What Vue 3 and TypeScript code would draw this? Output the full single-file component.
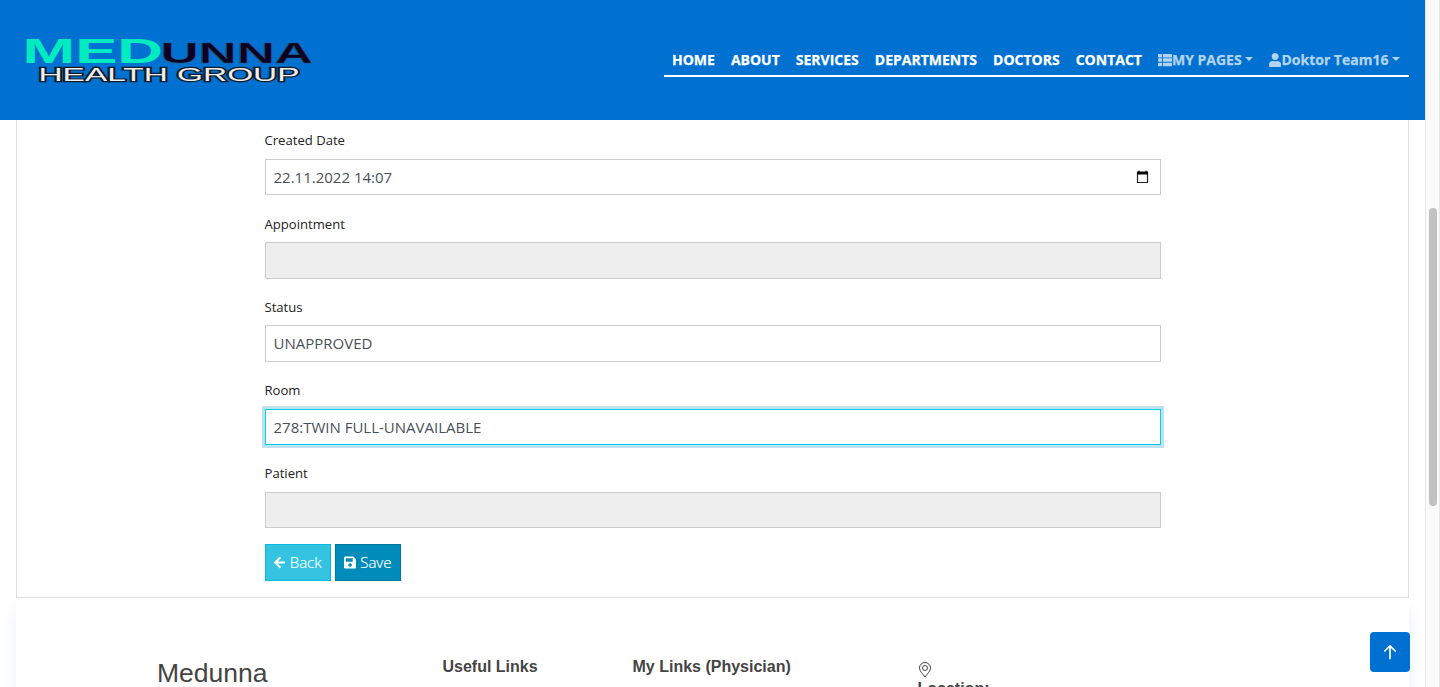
<script setup lang="ts">
interface Field {
  label: string
  value: string
  disabled?: boolean
  focused?: boolean
  date?: boolean
}

const links: string[] = ['HOME', 'ABOUT', 'SERVICES', 'DEPARTMENTS', 'DOCTORS', 'CONTACT']

const fields: Field[] = [
  { label: 'Created Date', value: '22.11.2022 14:07', date: true },
  { label: 'Appointment', value: '', disabled: true },
  { label: 'Status', value: 'UNAPPROVED' },
  { label: 'Room', value: '278:TWIN FULL-UNAVAILABLE', focused: true },
  { label: 'Patient', value: '', disabled: true },
]
</script>

<template>
  <div class="window">
    <div class="page">
      <header class="header">
        <svg class="logo" width="300" height="60" viewBox="0 0 300 60">
          <g font-family="Liberation Sans, Arial, sans-serif" font-weight="700">
            <text x="-0.500" y="33.300" font-size="34.500" textLength="140.500" lengthAdjust="spacingAndGlyphs" fill="#00ebc0">MED</text>
            <text x="137.500" y="33" font-size="30" textLength="152.500" lengthAdjust="spacingAndGlyphs" fill="#080325" stroke="#39496a" stroke-width="0.5">UNNA</text>
          </g>
          <text class="tagline" x="15.500" y="51.300" font-size="17.500" textLength="261" lengthAdjust="spacingAndGlyphs">HEALTH GROUP</text>
        </svg>
        <nav class="nav">
          <a v-for="link in links" :key="link" class="nav-link">{{ link }}</a>
          <a class="nav-link muted">
            <svg class="icon" width="14" height="14" viewBox="0 0 512 512" fill="currentColor">
              <path d="M149 216v80c0 13-11 24-24 24H24c-13 0-24-11-24-24v-80c0-13 11-24 24-24h101c13 0 24 11 24 24zM0 376v80c0 13 11 24 24 24h101c13 0 24-11 24-24v-80c0-13-11-24-24-24H24c-13 0-24 11-24 24zM125 32H24C11 32 0 43 0 56v80c0 13 11 24 24 24h101c13 0 24-11 24-24V56c0-13-11-24-24-24zm56 448h307c13 0 24-11 24-24v-80c0-13-11-24-24-24H181v128zM181 32v128h331V56c0-13-11-24-24-24H181zm0 160v128h331V192H181z" />
            </svg>
            <span>MY PAGES</span>
            <i class="caret" />
          </a>
          <a class="nav-link muted">
            <svg class="icon" width="12.25" height="14" viewBox="0 0 448 512" fill="currentColor">
              <path d="M224 256c70.700 0 128-57.300 128-128S294.700 0 224 0 96 57.300 96 128s57.300 128 128 128zm89.600 32h-16.700c-22.200 10.200-46.900 16-72.900 16s-50.600-5.800-72.900-16h-16.700C60.200 288 0 348.200 0 422.400V464c0 26.500 21.500 48 48 48h352c26.500 0 48-21.500 48-48v-41.600c0-74.200-60.200-134.400-134.400-134.400z" />
            </svg>
            <span>Doktor Team16</span>
            <i class="caret" />
          </a>
        </nav>
      </header>

      <main class="card">
        <form class="form">
          <div v-for="field in fields" :key="field.label" class="group">
            <label class="label">{{ field.label }}</label>
            <div class="control" :class="{ disabled: field.disabled, focused: field.focused }">
              <span>{{ field.value }}</span>
              <svg v-if="field.date" class="calendar" width="13" height="14" viewBox="0 0 13 14">
                <path d="M3 0.500v2M10 0.500v2" stroke="#555" stroke-width="1.500" />
                <path d="M1.500 2v10.500h10V2" fill="none" stroke="#222" stroke-width="1.200" />
                <path d="M1 1.500h11v3H1z" fill="#000" />
              </svg>
            </div>
          </div>
          <div class="actions">
            <button type="button" class="btn back">
              <svg width="13" height="15" viewBox="0 0 448 512" fill="currentColor">
                <path d="M257.500 445.100l-22.200 22.200c-9.400 9.400-24.600 9.400-33.900 0L7 273c-9.400-9.400-9.400-24.600 0-33.900L201.400 44.700c9.400-9.400 24.600-9.400 33.900 0l22.200 22.200c9.500 9.500 9.300 25-.4 34.300L136.600 216H424c13.300 0 24 10.700 24 24v32c0 13.300-10.700 24-24 24H136.600l120.500 114.800c9.800 9.300 10 24.800.4 34.300z" />
              </svg>
              <span>Back</span>
            </button>
            <button type="button" class="btn save">
              <svg width="13" height="15" viewBox="0 0 448 512" fill="currentColor">
                <path d="M433.900 129.900l-83.900-83.900A48 48 0 0 0 316.100 32H48C21.500 32 0 53.500 0 80v352c0 26.500 21.500 48 48 48h352c26.500 0 48-21.500 48-48V163.900a48 48 0 0 0-14.100-34zM224 416c-35.300 0-64-28.700-64-64s28.700-64 64-64 64 28.700 64 64-28.700 64-64 64zm96-304.500V212c0 6.600-5.400 12-12 12H76c-6.600 0-12-5.400-12-12V108c0-6.600 5.400-12 12-12h228.500c3.200 0 6.200 1.300 8.500 3.500l3.500 3.500a12 12 0 0 1 3.500 8.500z" />
              </svg>
              <span>Save</span>
            </button>
          </div>
        </form>
      </main>

      <footer class="footer">
        <h3 class="brand">Medunna</h3>
        <h4 class="heading">Useful Links</h4>
        <h4 class="heading">My Links (Physician)</h4>
        <div class="location">
          <svg width="14" height="16" viewBox="0 0 14 16" fill="none" stroke="#444" stroke-width="1">
            <path d="M7 15C5.200 12.300 1.500 9.300 1.500 6a5.500 5.500 0 0 1 11 0C12.500 9.300 8.800 12.300 7 15z" />
            <circle cx="7" cy="6" r="2.500" />
          </svg>
          <h4 class="heading">Location:</h4>
        </div>
      </footer>
    </div>

    <div class="scrollbar"><div class="thumb" /></div>

    <a class="to-top">
      <svg width="14" height="16" viewBox="0 0 14 16" fill="none" stroke="#fff" stroke-width="1.700" stroke-linecap="round" stroke-linejoin="round">
        <path d="M7 14.500V2M1.800 7L7 1.800 12.200 7" />
      </svg>
    </a>
  </div>
</template>

<style>
body {
  margin: 0;
  overflow: hidden;
}
</style>

<style scoped>
* {
  box-sizing: border-box;
}

.window {
  position: relative;
  display: flex;
  width: 1440px;
  height: 687px;
  overflow: hidden;
  background: #fff;
  color: #222;
  font-family: "Open Sans", "Noto Sans", sans-serif;
}

.page {
  width: 1425px;
  height: 687px;
  overflow: hidden;
}

.header {
  position: relative;
  z-index: 1;
  display: flex;
  justify-content: space-between;
  align-items: flex-start;
  height: 120px;
  padding: 30px 16px 0 23px;
  background: #0071d1;
}

.logo {
  display: block;
}

.tagline {
  font-family: "Liberation Sans", Arial, sans-serif;
  fill: #eee;
  stroke: #101c29;
  stroke-width: 2.4px;
  paint-order: stroke;
}

.nav {
  display: flex;
  width: 745px;
  height: 32px;
  margin-top: 15px;
  border-bottom: 2px solid #fff;
}

.nav-link {
  display: flex;
  align-items: center;
  height: 30px;
  padding: 0 8px;
  color: #fff;
  font-size: 14px;
  font-weight: 700;
  line-height: 20px;
  white-space: nowrap;
  -webkit-text-stroke: 0.25px currentColor;
}

.muted {
  color: #b3d4f1;
}

.icon {
  flex: none;
  margin-top: -1px;
}

.caret {
  margin-top: -2px;
  margin-left: 3.500px;
  border: 4px solid transparent;
  border-top-color: currentColor;
  border-bottom: 0;
}

.card {
  height: 478px;
  margin: 0 16px;
  border: 1px solid #dedede;
  border-top: 0;
}

.form {
  width: 896px;
  margin: 0 auto;
  padding-top: 11.300px;
}

.group {
  height: 83.250px;
}

.label {
  display: block;
  height: 27.500px;
  font-size: 13.100px;
  line-height: 19px;
}

.control {
  display: flex;
  align-items: center;
  justify-content: space-between;
  height: 36.500px;
  padding: 0 11px 0.500px 8px;
  border: 1px solid #ccc;
  background: #fff;
  color: #495057;
  font-size: 15px;
}

.disabled {
  background: #eee;
}

.focused {
  border-color: #0cf;
  box-shadow: 0 0 0 3px rgba(0, 140, 186, 0.25);
}

.actions {
  display: flex;
  gap: 4px;
  margin-top: -3.250px;
}

.btn {
  display: flex;
  align-items: center;
  gap: 4.500px;
  width: 66px;
  height: 36.500px;
  padding: 0 8px 1px;
  border: 1px solid;
  color: #fff;
  font-family: inherit;
  font-size: 15px;
  font-weight: 300;
  -webkit-text-stroke: 0.2px currentColor;
}

.back {
  border-color: #08b9e0;
  background: #35c3e2;
}

.save {
  border-color: #0079a1;
  background: #008cba;
}

.footer {
  display: grid;
  grid-template-columns: 285px 190px 285px 1fr;
  align-items: start;
  height: 300px;
  margin: 0 16px;
  padding: 56px 0 0 141.500px;
  box-shadow: 0 10px 15px rgba(0, 113, 209, 0.1);
  color: #444;
  font-family: "Liberation Sans", Arial, sans-serif;
}

.brand {
  margin: 4px 0 0 -0.500px;
  font-size: 26.500px;
  font-weight: 400;
  line-height: 31px;
}

.heading {
  margin: 3px 0 0;
  font-size: 16px;
  font-weight: 700;
  line-height: 19px;
}

.location {
  padding-top: 8px;
}

.location svg {
  display: block;
}

.location .heading {
  margin-top: 1px;
}

.scrollbar {
  width: 15px;
  height: 687px;
  padding: 208px 2px 0 3px;
  border: solid #e8e8e8;
  border-width: 0 1px;
  background: #fafafa;
}

.thumb {
  width: 8px;
  height: 298px;
  border-radius: 4px;
  background: #c1c1c1;
}

.to-top {
  position: absolute;
  z-index: 2;
  right: 30px;
  bottom: 15px;
  display: flex;
  align-items: center;
  justify-content: center;
  width: 40px;
  height: 40px;
  border-radius: 4px;
  background: #0071d1;
}
</style>
